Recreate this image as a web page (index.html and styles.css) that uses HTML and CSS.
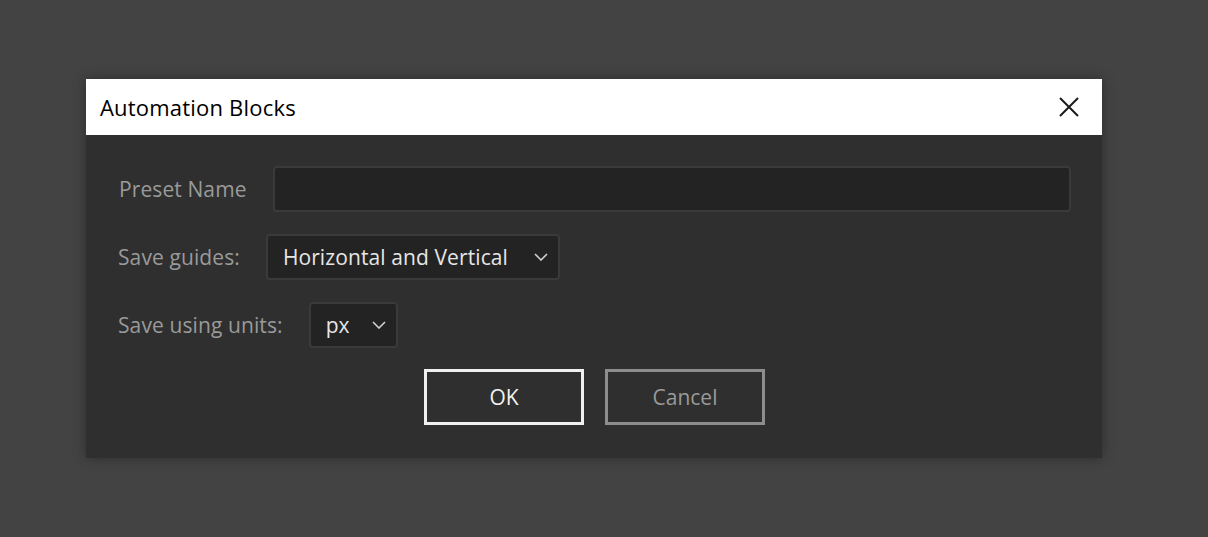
FILE: index.html
```html
<!DOCTYPE html>
<html>
<head>
<meta charset="utf-8">
<link rel="stylesheet" href="styles.css">
</head>
<body>
<div class="stage">
  <div class="dialog">
    <div class="titlebar">
      <span class="title">Automation Blocks</span>
      <svg class="close" width="20" height="20" viewBox="0 0 20 20"><path d="M1 1 L19 19 M19 1 L1 19" stroke="#1a1a1a" stroke-width="2" fill="none"/></svg>
    </div>
    <div class="body">
      <div class="row">
        <span class="label label-preset">Preset Name</span>
        <div class="input"></div>
      </div>
      <div class="row">
        <span class="label">Save guides:</span>
        <div class="select select-guides">
          <span class="value">Horizontal and Vertical</span>
          <svg class="chev" width="14" height="8" viewBox="0 0 14 8"><path d="M1 1 L7 7 L13 1" stroke="#d0d0d0" stroke-width="1.6" fill="none"/></svg>
        </div>
      </div>
      <div class="row">
        <span class="label">Save using units:</span>
        <div class="select select-units">
          <span class="value">px</span>
          <svg class="chev" width="14" height="8" viewBox="0 0 14 8"><path d="M1 1 L7 7 L13 1" stroke="#d0d0d0" stroke-width="1.6" fill="none"/></svg>
        </div>
      </div>
      <div class="buttons">
        <div class="btn btn-ok">OK</div>
        <div class="btn btn-cancel">Cancel</div>
      </div>
    </div>
  </div>
</div>
</body>
</html>
```

FILE: styles.css
```css
html, body {
  margin: 0;
  padding: 0;
  background: #434343;
  font-family: "Open Sans", "Noto Sans", "Liberation Sans", sans-serif;
}
.stage {
  width: 1208px;
  height: 537px;
  padding-top: 79px;
  padding-left: 86px;
  box-sizing: border-box;
}
.dialog {
  width: 1016px;
  background: #2f2f2f;
  box-shadow: 0 0 12px rgba(0,0,0,0.35);
}
.titlebar {
  height: 56px;
  background: #ffffff;
  display: flex;
  align-items: center;
  justify-content: space-between;
  padding: 0 23px 0 14px;
}
.title {
  font-size: 22px;
  color: #000;
  letter-spacing: 0.2px;
}
.close { display: block; }
.body {
  padding: 31px 31px 33px 32px;
  display: flex;
  flex-direction: column;
  gap: 22px;
}
.row {
  display: flex;
  align-items: center;
  gap: 26px;
  height: 46px;
}
.label {
  font-size: 21px;
  color: #9a9a9a;
  letter-spacing: 0.1px;
}
.label-preset { margin-left: 1px; margin-right: 0; }
.input {
  flex: 1;
  height: 46px;
  box-sizing: border-box;
  background: #232323;
  border: 2px solid #3a3a3a;
  border-radius: 4px;
}
.select {
  height: 46px;
  box-sizing: border-box;
  background: #232323;
  border: 2px solid #3a3a3a;
  border-radius: 4px;
  display: flex;
  align-items: center;
  justify-content: space-between;
  padding: 0 10px 0 15px;
}
.select .value {
  font-size: 21px;
  color: #e6e6e6;
  letter-spacing: 0.1px;
}
.select-guides { width: 294px; }
.select-units { width: 89px; }
.chev { display: block; }
.buttons {
  display: flex;
  justify-content: center;
  gap: 21px;
  margin-top: -1px;
}
.btn {
  width: 160px;
  height: 56px;
  box-sizing: border-box;
  display: flex;
  align-items: center;
  justify-content: center;
  font-size: 21px;
}
.btn-ok {
  border: 3px solid #f0f0f0;
  color: #f2f2f2;
}
.btn-cancel {
  border: 3px solid #8d8d8d;
  color: #9a9a9a;
}
```
